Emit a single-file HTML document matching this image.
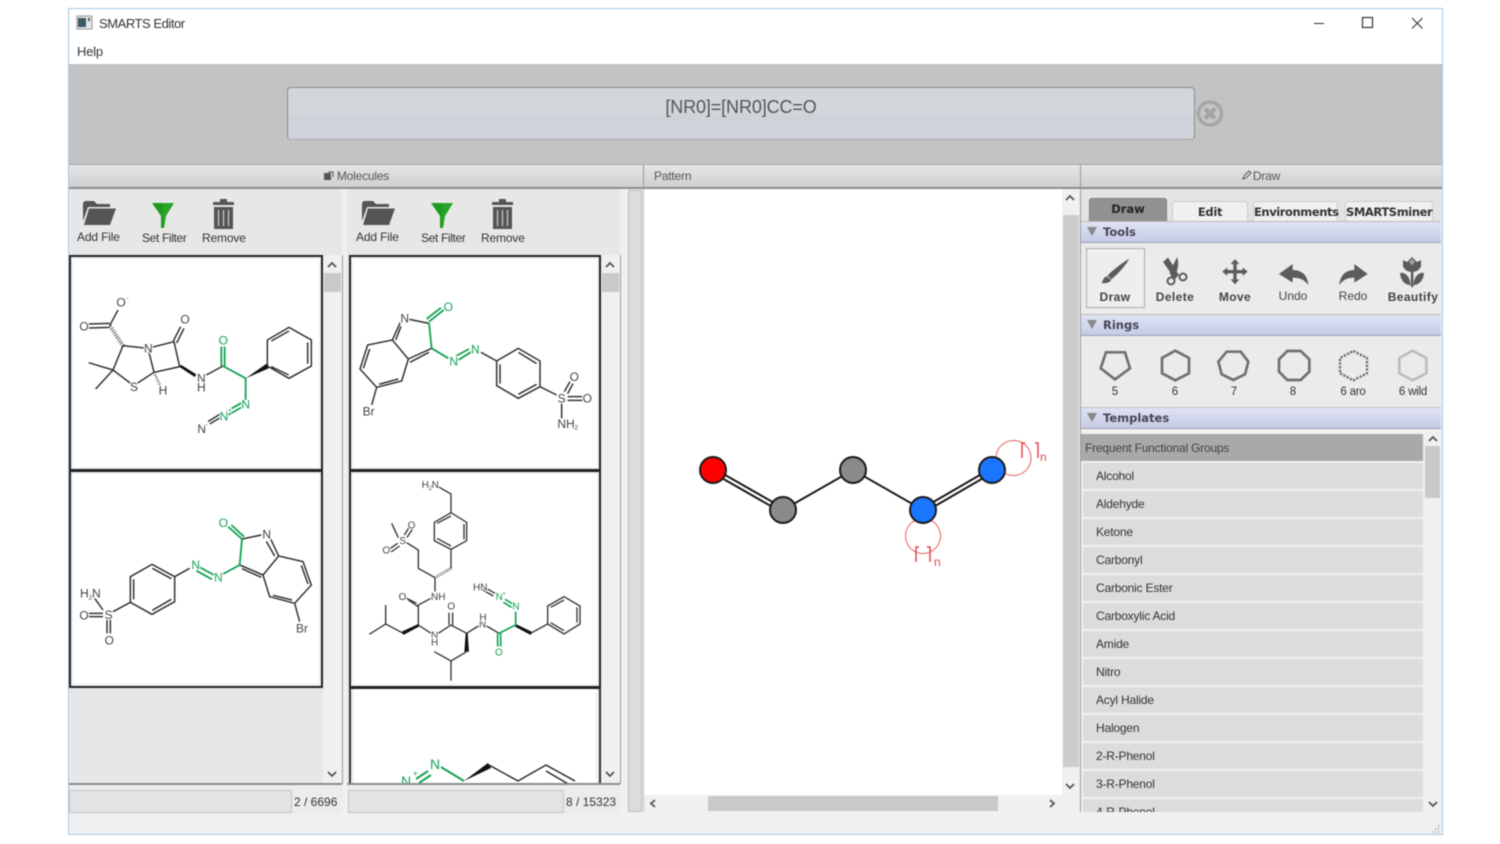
<!DOCTYPE html>
<html><head><meta charset="utf-8"><title>SMARTS Editor</title>
<style>
html,body{margin:0;padding:0;background:#fff}
#w{position:relative;width:1500px;height:844px;overflow:hidden;background:#fff;font-family:"Liberation Sans",sans-serif;color:#333;filter:blur(.4px)}
#w div{position:absolute;box-sizing:border-box}
.t{white-space:nowrap;line-height:14px}
.hd{top:164px;height:25px;background:linear-gradient(#e6e6e6,#d0d0d0);border-top:1px solid #a8a8a8;border-bottom:2px solid #8c8c8c;font-size:12px;letter-spacing:-.2px;color:#555;line-height:23px;text-align:center}
.tab{font:bold 11.5px "DejaVu Sans",sans-serif;text-align:center;color:#333;border:1px solid #ccc;border-bottom:0;border-radius:3px 3px 0 0;background:#f0f0f0;white-space:nowrap}
.sec{left:1081px;width:360px;height:22px;background:linear-gradient(#dfe3f4,#c5cbe5);border-top:1px solid #bbb;border-bottom:1px solid #9a9fb5;font:bold 11.5px/20px "DejaVu Sans",sans-serif;color:#445;padding-left:22px}
.row{left:1083px;width:340px;height:26px;background:#dcdcdc;font-size:12px;letter-spacing:-.2px;line-height:26px;padding-left:13px;color:#333}
.cell{background:#fff;border:2px solid #222;box-shadow:inset 0 0 0 2px #eee}
.lb{font-size:12px;color:#333;letter-spacing:-.15px}
</style></head><body><div id="w">

<!-- window -->
<div style="left:68px;top:8px;width:1375px;height:827px;background:#f0f0f0;border:1px solid #a5c8e4"></div>
<div style="left:69px;top:9px;width:1373px;height:55px;background:#fff"></div>
<div class="t" style="left:99px;top:17px;font-size:13px;letter-spacing:-.45px;color:#333">SMARTS Editor</div>
<div class="t" style="left:77px;top:45px;font-size:13px;letter-spacing:-.2px;color:#333">Help</div>
<div style="left:69px;top:64px;width:1373px;height:100px;background:#c3c3c3"></div>
<div style="left:287px;top:87px;width:908px;height:53px;border-radius:4px;border:1px solid #8c8c8c;border-bottom-color:#aaa;background:linear-gradient(#d2d7dc 0,#d2d7dc 50%,#cdd3d9 50%,#cdd3d9 100%);text-align:center;font-size:18px;letter-spacing:-.12px;line-height:39px;color:#555">[NR0]=[NR0]CC=O</div>

<!-- headers -->
<div class="hd" style="left:69px;width:575px;border-right:1px solid #999;padding-left:14px">Molecules</div>
<div class="hd" style="left:644px;width:437px;border-right:1px solid #999;text-align:left;padding-left:10px">Pattern</div>
<div class="hd" style="left:1081px;width:361px;padding-left:10px">Draw</div>

<!-- left panels -->
<div style="left:69px;top:189px;width:273px;height:595px;background:#e7e7e7"></div>
<div style="left:347px;top:189px;width:273px;height:595px;background:#e7e7e7"></div>
<div style="left:323px;top:255px;width:19px;height:528px;background:#f0f0f0"></div>
<div style="left:601px;top:255px;width:19px;height:528px;background:#f0f0f0"></div>
<div style="left:324px;top:273px;width:17px;height:19px;background:#c9c9c9"></div>
<div style="left:602px;top:273px;width:17px;height:19px;background:#c9c9c9"></div>
<div style="left:69px;top:783px;width:273px;height:2px;background:#8c8c8c"></div>
<div style="left:347px;top:783px;width:273px;height:2px;background:#8c8c8c"></div>
<div style="left:342px;top:255px;width:1px;height:529px;background:#999"></div>
<div style="left:620px;top:255px;width:1px;height:529px;background:#999"></div>

<div class="t lb" style="left:77px;top:230px">Add File</div>
<div class="t lb" style="left:142px;top:231px;letter-spacing:-.35px">Set Filter</div>
<div class="t lb" style="left:202px;top:231px">Remove</div>
<div class="t lb" style="left:356px;top:230px">Add File</div>
<div class="t lb" style="left:421px;top:231px;letter-spacing:-.35px">Set Filter</div>
<div class="t lb" style="left:481px;top:231px">Remove</div>

<div class="cell" style="left:69px;top:255px;width:254px;height:216px"></div>
<div class="cell" style="left:69px;top:470px;width:254px;height:218px"></div>
<div class="cell" style="left:349px;top:255px;width:252px;height:216px"></div>
<div class="cell" style="left:349px;top:470px;width:252px;height:218px"></div>
<div style="left:349px;top:687px;width:252px;height:96px;background:#fff;border-left:2px solid #333;border-right:2px solid #333;border-top:2px solid #222;box-shadow:inset 3px 0 0 #eee,inset -3px 0 0 #eee"></div>

<!-- status -->
<div style="left:69px;top:785px;width:273px;height:29px;background:#ececec"></div>
<div style="left:347px;top:785px;width:273px;height:29px;background:#ececec"></div>
<div style="left:69px;top:790px;width:223px;height:23px;background:#e4e4e4;border:1px solid #c4c4c4"></div>
<div style="left:348px;top:790px;width:216px;height:23px;background:#e4e4e4;border:1px solid #c4c4c4"></div>
<div class="t" style="left:294px;top:795px;font-size:12px">2 / 6696</div>
<div class="t" style="left:566px;top:795px;font-size:12px">8 / 15323</div>

<!-- splitter -->
<div style="left:628px;top:190px;width:14px;height:622px;background:#dcdcdc;border:1px solid #bdbdbd"></div>

<!-- pattern -->
<div style="left:644px;top:189px;width:418px;height:606px;background:#fff"></div>
<div style="left:643px;top:189px;width:1px;height:623px;background:#bbb"></div>
<div style="left:1062px;top:189px;width:18px;height:606px;background:#f0f0f0"></div>
<div style="left:1063px;top:215px;width:16px;height:552px;background:#cdcdcd"></div>
<div style="left:644px;top:795px;width:418px;height:17px;background:#f0f0f0"></div>
<div style="left:708px;top:796px;width:290px;height:15px;background:#c9c9c9"></div>
<div style="left:1080px;top:164px;width:1px;height:648px;background:#999"></div>

<!-- right panel -->
<div style="left:1081px;top:189px;width:360px;height:32px;background:#e3e3e3"></div>
<div class="tab" style="left:1089px;top:198px;width:78px;height:23px;background:#919191;border-color:#808080;line-height:21px;color:#222">Draw</div>
<div class="tab" style="left:1172px;top:201px;width:76px;height:20px;line-height:20px;letter-spacing:-.3px">Edit</div>
<div class="tab" style="left:1253px;top:201px;width:85px;height:20px;line-height:20px;letter-spacing:-.42px">Environments</div>
<div class="tab" style="left:1345px;top:201px;width:88px;height:20px;line-height:20px;letter-spacing:-.4px">SMARTSminer</div>
<div style="left:1081px;top:243px;width:360px;height:70px;background:#ebebeb"></div>
<div style="left:1081px;top:335px;width:360px;height:71px;background:#ebebeb"></div>
<div class="sec" style="top:221px">Tools</div>
<div class="sec" style="top:314px">Rings</div>
<div class="sec" style="top:407px">Templates</div>
<div style="left:1086px;top:248px;width:59px;height:60px;border:1px solid #aaa;background:#eee"></div>

<div class="t" style="left:1085px;top:290px;width:60px;text-align:center;font:bold 12px/14px 'Liberation Sans',sans-serif;color:#444;letter-spacing:.4px">Draw</div>
<div class="t" style="left:1145px;top:290px;width:60px;text-align:center;font:bold 12px/14px 'Liberation Sans',sans-serif;color:#444;letter-spacing:.4px">Delete</div>
<div class="t" style="left:1205px;top:290px;width:60px;text-align:center;font:bold 12px/14px 'Liberation Sans',sans-serif;color:#444;letter-spacing:.4px">Move</div>
<div class="t" style="left:1263px;top:289px;width:60px;text-align:center;font-size:12px;color:#444">Undo</div>
<div class="t" style="left:1323px;top:289px;width:60px;text-align:center;font-size:12px;color:#444">Redo</div>
<div class="t" style="left:1383px;top:290px;width:60px;text-align:center;font:bold 12px/14px 'Liberation Sans',sans-serif;color:#444;letter-spacing:.4px">Beautify</div>

<div class="t" style="left:1085px;top:385px;width:60px;text-align:center;font-size:11.5px">5</div>
<div class="t" style="left:1145px;top:385px;width:60px;text-align:center;font-size:11.5px">6</div>
<div class="t" style="left:1204px;top:385px;width:60px;text-align:center;font-size:11.5px">7</div>
<div class="t" style="left:1263px;top:385px;width:60px;text-align:center;font-size:11.5px">8</div>
<div class="t" style="left:1323px;top:385px;width:60px;text-align:center;font-size:11.5px;letter-spacing:-.2px">6 aro</div>
<div class="t" style="left:1383px;top:385px;width:60px;text-align:center;font-size:11.5px;letter-spacing:-.2px">6 wild</div>

<!-- templates -->
<div style="left:1081px;top:429px;width:360px;height:383px;background:#f0f0f0;overflow:hidden">
  <div style="left:0;top:5px;width:342px;height:27px;background:#a9a9a9;font-size:12px;letter-spacing:-.2px;line-height:28px;padding-left:4px;color:#444">Frequent Functional Groups</div>
  <div class="row" style="left:2px;top:34px">Alcohol</div>
  <div class="row" style="left:2px;top:62px">Aldehyde</div>
  <div class="row" style="left:2px;top:90px">Ketone</div>
  <div class="row" style="left:2px;top:118px">Carbonyl</div>
  <div class="row" style="left:2px;top:146px">Carbonic Ester</div>
  <div class="row" style="left:2px;top:174px">Carboxylic Acid</div>
  <div class="row" style="left:2px;top:202px">Amide</div>
  <div class="row" style="left:2px;top:230px">Nitro</div>
  <div class="row" style="left:2px;top:258px">Acyl Halide</div>
  <div class="row" style="left:2px;top:286px">Halogen</div>
  <div class="row" style="left:2px;top:314px">2-R-Phenol</div>
  <div class="row" style="left:2px;top:342px">3-R-Phenol</div>
  <div class="row" style="left:2px;top:370px">4-R-Phenol</div>
  <div style="left:344px;top:17px;width:15px;height:52px;background:#c9c9c9"></div>
</div>

<svg width="1500" height="844" viewBox="0 0 1500 844" style="position:absolute;left:0;top:0" font-family="Liberation Sans, sans-serif">
<defs><clipPath id="c5"><rect x="351" y="689" width="248" height="94"/></clipPath></defs>

<!-- title icon -->
<rect x="77" y="16" width="15" height="13" fill="#e4e4e4" stroke="#999"/><rect x="78" y="18" width="8" height="9" fill="#3b5a66"/><rect x="88" y="18" width="2" height="3" fill="#555"/>
<!-- window controls -->
<path d="M1314 23.500h10" stroke="#333" fill="none"/><rect x="1362.500" y="17.500" width="10" height="10" fill="none" stroke="#333" stroke-width="1.200"/><path d="M1412 18l10.500 10.500M1422.500 18l-10.500 10.500" stroke="#333" fill="none" stroke-width="1.100"/>
<!-- clear -->
<circle cx="1210" cy="113.500" r="11.500" fill="#c6c6c6" stroke="#a6a6a6" stroke-width="3.500"/><path d="M1205 108.500l10 10M1215 108.500l-10 10" stroke="#a6a6a6" stroke-width="4.500"/>
<!-- header icons -->
<rect x="324" y="173" width="7" height="7" fill="#555"/><path d="M328 172h5v5" fill="none" stroke="#555"/>
<path d="M1243 179l1-3 5-5 2 2-5 5z" fill="none" stroke="#555"/>

<!-- toolbar icons -->
<g id="tb">
<path d="M83 204q0-3 3-3h8l3 3h13v3H88l-5 14z" fill="#555"/><path d="M89 208.500h27l-6 16.500H84z" fill="#555"/>
<path d="M152 203h22l-8 13-2 12-3 0v-12z" fill="#1f9a1f"/><path d="M163 203h11l-8 13-3 12z" fill="#2eae2e" opacity=".6"/>
<path d="M220 199h7v3h7v3h-21v-3h7z" fill="#555"/><rect x="214" y="207" width="19" height="22" fill="#555"/><path d="M218.500 210v16M223.500 210v16M228.500 210v16" stroke="#ccc" stroke-width="1.200"/>
</g>
<use href="#tb" x="279"/>

<!-- scroll arrows -->
<g fill="none" stroke="#555" stroke-width="1.800">
<path d="M328 267l4-4 4 4M328 772l4 4 4-4M606 267l4-4 4 4M606 772l4 4 4-4M1066 200l4-4 4 4M1066 784l4 4 4-4M655 800l-4 3.500 4 3.500M1050 800l4 3.500-4 3.500M1429 441l4-4 4 4M1429 802l4 4 4-4"/>
</g>
<!-- collapse triangles -->
<path d="M1087 227h10l-5 9zM1087 320h10l-5 9zM1087 413h10l-5 9z" fill="#888"/>
<!-- grip -->
<path d="M1438 826h1M1435 829h1M1438 829h1M1432 832h1M1435 832h1M1438 832h1" stroke="#aaa" stroke-width="2" fill="none"/>

<!-- tool icons -->
<g fill="#5c5c5c">
<!-- scissors -->
<path d="M1163 262L1168 257.500 1179 275 1175 279Z"/>
<path d="M1177 257C1179.500 264 1178 271 1173 279L1169.500 273Z"/>
<circle cx="1171" cy="281" r="3.500" fill="none" stroke="#5c5c5c" stroke-width="2"/>
<circle cx="1183" cy="277" r="3.500" fill="none" stroke="#5c5c5c" stroke-width="2"/>
<!-- tulip -->
<path d="M1403 260l4 2 5-5 5 5 4-2v6c-1 4-5 6-9 6s-8-2-9-6z"/>
<path d="M1410.800 270h2.600v17h-2.600z"/>
<path d="M1400 273c6-1 10 4 10.500 12-6 0-10-5-10.500-12zM1424 273c-6-1-10 4-10.500 12 6 0 10-5 10.500-12z"/>
</g>
<path d="M1412 258.500l3 3.500-3 3.500-3-3.500z" fill="#a0a0a0"/>
<g transform="translate(1070,160) scale(.33333)">
<g fill="#5c5c5c">
<path d="M178 296C150 313 126 333 112 347L124 358C146 340 166 318 178 296Z"/>
<path d="M110 349C98 352 101 362 94 369C110 371 122 367 123 359Z"/>
<path d="M495 297l-13 15h8v18h-18v-8l-15 13 15 13v-8h18v18h-8l13 15 13-15h-8v-18h18v8l15-13-15-13v8h-18v-18h8z"/>
<path d="M668 312L627 342 668 368V353C690 353 705 360 715 376 713 345 695 330 668 330Z"/>
<path d="M853 312L893 342 853 368V353C832 353 817 360 808 376 810 345 828 330 853 330Z"/>
</g>
<g fill="none" stroke="#707070" stroke-width="8">
<path d="M108 577H165L180 625 135 658 92 625Z"/>
<path d="M316 572L357 594V640L316 661 276 640V594Z"/>
<path d="M470 575H512L535 605 525 643 490 660 455 643 445 605Z"/>
<path d="M652 573H692L718 598V635L692 660H652L627 635V598Z"/>
<path d="M850 573L891 594V640L850 661 810 640V594Z" stroke-width="7" stroke-dasharray="7 4"/>
<path d="M1028 572L1069 594V640L1028 661 988 640V594Z" stroke="#bcbcbc"/>
</g>
</g>

<!-- molecule 1 -->
<g transform="translate(68,255) scale(.33333)" fill="none" stroke="#333" stroke-width="4.500" font-size="36">
<path d="M125 212L150 165M125 205L60 207M125 217L60 219M165 272L240 280M165 272L135 345 197 392 258 352 240 280 318 260 335 335 258 352M135 345L62 323M135 345L83 402M316 258L338 215M326 264L348 220M415 360L465 333M598 333V255L663 217 730 255V333L663 370 598 333M610 258L663 228M719 262V326M610 335L662 360M465 483L425 507M460 475L420 500"/>
<path d="M165 272L125 212" stroke-width="12" stroke-dasharray="2.500 5"/>
<path d="M258 352L278 395" stroke-width="8" stroke-dasharray="2.500 5"/>
<path d="M333 335L340 330 385 358 380 366Z" fill="#111" stroke="none"/>
<path d="M533 370L596 326 602 340Z" fill="#111" stroke="none"/>
<path d="M465 333L533 370V435M533 450L480 480M527 440L474 470M460 275V333M470 275V333" stroke="#14a356" stroke-width="5.500"/>
<g stroke="#fff" stroke-width="7" paint-order="stroke" fill="#444">
<text x="145" y="155">O</text><text x="175" y="135" font-size="20">-</text><text x="34" y="227">O</text><text x="337" y="205">O</text><text x="228" y="292">N</text><text x="186" y="408">S</text><text x="272" y="418">H</text><text x="387" y="382">N</text><text x="387" y="410">H</text><text x="388" y="534">N</text><text x="412" y="515" font-size="20">-</text>
</g>
<g stroke="#fff" stroke-width="7" paint-order="stroke" fill="#14a356"><text x="452" y="268">O</text><text x="520" y="460">N</text><text x="455" y="496">N</text><text x="480" y="472" font-size="20">+</text></g>
</g>

<!-- molecule 2 -->
<g transform="translate(68,470) scale(.33333)" fill="none" stroke="#333" stroke-width="4.500" font-size="36">
<path d="M522 207L580 195M607 205L632 258 705 275 730 345 680 400 605 380 585 315 632 258M595 214L620 258M700 286L720 342M672 390L615 376M515 285L585 315M522 296L580 322M680 400L695 455M320 320V395L252 433 187 397V320L252 283 320 320M197 328V388M253 421L310 388M253 295L310 326M320 320L365 295M187 397L135 425M105 420L80 385M117 450V490M127 450V490M62 430H105M62 440H105"/>
<path d="M480 170L522 207M490 165L528 200M522 207L515 285 465 312M392 290L438 315M385 302L432 328" stroke="#14a356" stroke-width="5.500"/>
<g stroke="#fff" stroke-width="7" paint-order="stroke" fill="#444"><text x="583" y="205">N</text><text x="684" y="488">Br</text><text x="36" y="382">H</text><text x="62" y="388" font-size="20">2</text><text x="72" y="382">N</text><text x="110" y="447">S</text><text x="34" y="448">O</text><text x="110" y="523">O</text></g>
<g stroke="#fff" stroke-width="7" paint-order="stroke" fill="#14a356"><text x="452" y="171">O</text><text x="370" y="297">N</text><text x="438" y="335">N</text></g>
</g>

<!-- molecule 3 -->
<g transform="translate(345,255) scale(.33333)" fill="none" stroke="#333" stroke-width="4.500" font-size="36">
<path d="M252 205L193 193M166 202L142 255 68 270 45 342 95 397 170 378 190 312 142 255M168 214L152 255M74 282L55 340M102 388L160 372M190 312L260 280M195 322L252 292M95 397L80 450M455 318V392L520 430 585 395V318L520 280 455 318M465 328V386M520 418L575 388M520 292L575 326M455 318L408 292M585 395L635 420M650 445V490M658 410L675 380M668 416L684 386M668 425H712M668 436H712"/>
<path d="M296 165L252 200M288 158L245 192M252 205L260 280 310 310M340 315L380 290M333 303L372 282" stroke="#14a356" stroke-width="5.500"/>
<g stroke="#fff" stroke-width="7" paint-order="stroke" fill="#444"><text x="166" y="203">N</text><text x="53" y="482">Br</text><text x="638" y="443">S</text><text x="674" y="378">O</text><text x="713" y="443">O</text><text x="637" y="519">NH</text><text x="688" y="524" font-size="20">2</text></g>
<g stroke="#fff" stroke-width="7" paint-order="stroke" fill="#14a356"><text x="296" y="168">O</text><text x="313" y="331">N</text><text x="378" y="295">N</text></g>
</g>

<!-- molecule 4 -->
<g transform="translate(345,470) scale(.33333)" fill="none" stroke="#333" stroke-width="4" font-size="30">
<path d="M280 50L318 72V128L365 157V212L318 238 268 212V157L318 128M357 162V208M318 228L276 205M276 160L318 138M318 238V295M270 323L220 295V240L185 218M160 203L140 160M178 195L194 170M186 202L202 178M158 220L132 238M164 228L138 246M270 323V365M258 385L220 405 220 465M215 400L185 385M220 410L190 390M220 465L258 490M280 490L318 465 365 490M312 465V428M323 465V428M365 490L400 468M425 468L462 490M175 490L122 462V405M122 462L73 493M365 545L318 573 268 545M318 573V632M557 490L608 462V408L657 380 705 408V462L657 492 608 462M617 412L657 390M696 412V458M617 458L657 482"/>
<path d="M318 295L270 323" stroke-width="9" stroke-dasharray="2 4"/>
<path d="M220 462L222 470 175 495 170 485Z" fill="#111" stroke="none"/>
<path d="M362 490H368L372 545H358Z" fill="#111" stroke="none"/>
<path d="M512 462L510 470 557 495 560 485Z" fill="#111" stroke="none"/>
<path d="M415 350L450 370M410 358L445 378"/>
<path d="M462 490L512 465V425M458 490V530M467 490V530M480 388L505 403M475 397L500 412" stroke="#14a356" stroke-width="5"/>
<g stroke="#fff" stroke-width="6" paint-order="stroke" fill="#444"><text x="230" y="54">H</text><text x="251" y="60" font-size="18">2</text><text x="260" y="54">N</text><text x="163" y="222">S</text><text x="188" y="175">O</text><text x="112" y="250">O</text><text x="258" y="390">NH</text><text x="161" y="390">O</text><text x="258" y="505">N</text><text x="258" y="527">H</text><text x="307" y="418">O</text><text x="402" y="473">N</text><text x="403" y="451">H</text><text x="384" y="362">HN</text></g>
<g stroke="#fff" stroke-width="6" paint-order="stroke" fill="#14a356"><text x="450" y="556">O</text><text x="502" y="418">N</text><text x="452" y="390">N</text><text x="472" y="376" font-size="18">+</text></g>
</g>

<!-- molecule 5 -->
<g clip-path="url(#c5)">
<path d="M464 781L488 763 491 768Z" fill="#111"/>
<path d="M489 765L518 781 546 765 575 781M546 771L570 785" fill="none" stroke="#222" stroke-width="1.400"/>
<path d="M441 767L464 781M416 779L428 771M419 783L431 775" fill="none" stroke="#14a356" stroke-width="2"/>
<text x="430" y="769" font-size="14" fill="#14a356">N</text><text x="401" y="786" font-size="14" fill="#14a356">N</text><text x="413" y="776" font-size="8" fill="#14a356">+</text>
</g>

<!-- pattern graph -->
<g fill="none" stroke="#1a1a1a">
<path d="M713 468L783 508M713 473L783 513" stroke-width="2"/>
<path d="M783 510L853 470 923 510" stroke-width="2"/>
<path d="M923 508L992 468M923 513L992 473" stroke-width="2"/>
</g>
<g fill="none" stroke="#e87878" stroke-width="1.200"><circle cx="1013.500" cy="458" r="17.500"/><circle cx="923" cy="536" r="17.500"/></g>
<g stroke="#1a1a1a" stroke-width="2">
<circle cx="713" cy="470" r="13" fill="#f00"/><circle cx="783" cy="510" r="13" fill="#8a8a8a"/><circle cx="853" cy="470" r="13" fill="#8a8a8a"/><circle cx="923" cy="510" r="13" fill="#1a75ff"/><circle cx="992" cy="470" r="13" fill="#1a75ff"/>
</g>
<g fill="none" stroke="#e0484e" stroke-width="1.500">
<path d="M1022 458v-15h3M1035 443h3v15M916 562v-15h3M927 547h3v15"/>
</g>
<text x="1040" y="461" font-size="12" fill="#e0484e">n</text><text x="934" y="566" font-size="12" fill="#e0484e">n</text>
</svg>
</div></body></html>
